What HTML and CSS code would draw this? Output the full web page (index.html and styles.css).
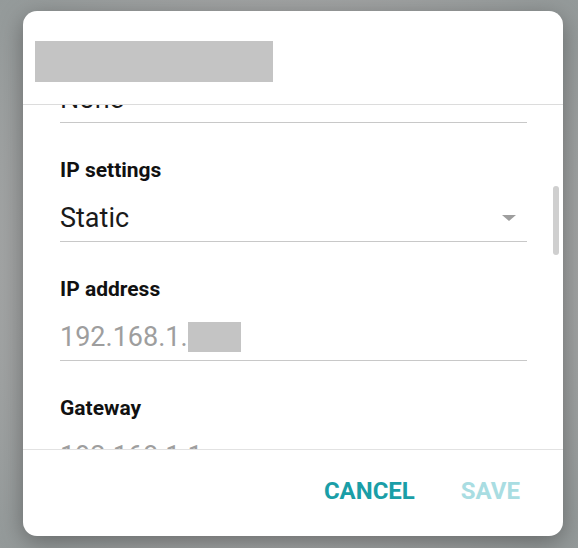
FILE: index.html
```html
<!DOCTYPE html>
<html lang="en">
<head>
<meta charset="utf-8">
<title>Network settings</title>
<link rel="stylesheet" href="styles.css">
</head>
<body>
  <div class="dialog">
    <div class="dialog-header">
      <div class="title-redacted"></div>
    </div>

    <div class="dialog-body">
      <div class="field-list">
        <div class="field">
          <div class="field-label">Proxy</div>
          <div class="field-value">None</div>
        </div>
        <div class="field">
          <div class="field-label">IP settings</div>
          <div class="field-value select">
            <span>Static</span>
            <span class="caret"></span>
          </div>
        </div>
        <div class="field">
          <div class="field-label">IP address</div>
          <div class="field-value hint">192.168.1.<span class="redacted"></span></div>
        </div>
        <div class="field">
          <div class="field-label">Gateway</div>
          <div class="field-value hint">192.168.1.1</div>
        </div>
      </div>
      <div class="scroll-thumb"></div>
    </div>

    <div class="dialog-footer">
      <button class="btn">CANCEL</button>
      <button class="btn disabled">SAVE</button>
    </div>
  </div>
</body>
</html>
```

FILE: styles.css
```css
html, body {
  margin: 0;
  padding: 0;
}

body {
  width: 578px;
  height: 548px;
  overflow: hidden;
  background: radial-gradient(ellipse at 50% 50%, #b0b0b0 0%, #a6a7a7 60%, #949a9a 100%);
  font-family: Roboto, "Liberation Sans", sans-serif;
  padding-top: 11px;
  box-sizing: border-box;
}

.dialog {
  margin-left: 23px;
  width: 540px;
  height: 525px;
  background: #fff;
  border-radius: 14px;
  box-shadow: 0 6px 24px rgba(0, 0, 0, 0.35);
  display: flex;
  flex-direction: column;
  overflow: hidden;
}

/* header with the (hidden) network name */
.dialog-header {
  height: 94px;
  flex: none;
  border-bottom: 1px solid #dcdcdc;
  padding: 30px 0 0 12px;
  box-sizing: border-box;
}

.title-redacted {
  width: 238px;
  height: 41px;
  background: #c4c4c4;
}

/* scrolled form area */
.dialog-body {
  position: relative;
  flex: 1;
  overflow: hidden;
}

.field-list {
  margin-top: -66px;
  padding: 0 36px 0 37px;
}

.field {
  margin-bottom: 35px;
}

.field-label {
  font-size: 21px;
  font-weight: 700;
  line-height: 24px;
  color: #111;
  margin-bottom: 20px;
}

.field-value {
  font-size: 27px;
  line-height: 32px;
  color: #1a1a1a;
  padding-bottom: 7px;
  border-bottom: 1px solid #c8c8c8;
  display: flex;
  align-items: center;
}

.field-value.hint {
  color: #9e9e9e;
}

.select {
  justify-content: space-between;
}

.caret {
  width: 0;
  height: 0;
  border-left: 7px solid transparent;
  border-right: 7px solid transparent;
  border-top: 6px solid #9e9e9e;
  margin-right: 11px;
}

.redacted {
  display: inline-block;
  width: 53px;
  height: 30px;
  background: #c4c4c4;
}

.scroll-thumb {
  position: absolute;
  right: 4px;
  top: 81px;
  width: 6px;
  height: 69px;
  border-radius: 3px;
  background: #cfcfcf;
}

/* action row */
.dialog-footer {
  height: 87px;
  flex: none;
  border-top: 1px solid #e2e2e2;
  box-sizing: border-box;
  display: flex;
  justify-content: flex-end;
  align-items: flex-start;
  gap: 46px;
  padding: 28px 43px 0 0;
}

.btn {
  border: none;
  background: none;
  padding: 0;
  font-family: Roboto, "Liberation Sans", sans-serif;
  font-size: 24px;
  font-weight: 700;
  line-height: 26px;
  color: #1a9ea7;
}

.btn.disabled {
  color: #a9dde2;
}
```
